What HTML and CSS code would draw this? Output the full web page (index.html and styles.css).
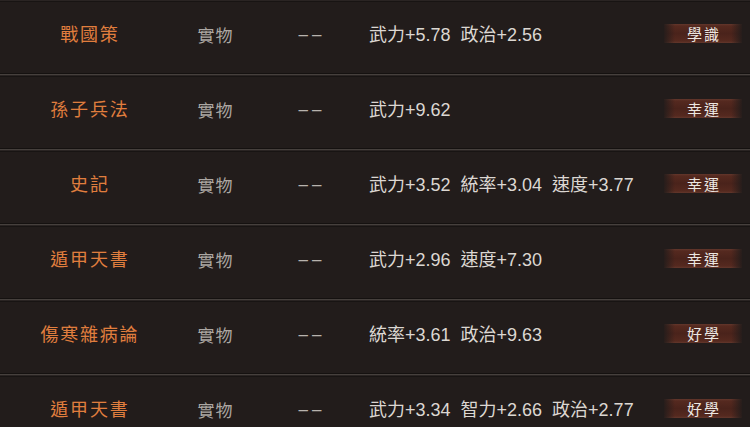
FILE: index.html
```html
<!DOCTYPE html>
<html lang="zh-Hant">
<head>
<meta charset="utf-8">
<link rel="stylesheet" href="styles.css">
</head>
<body>
<div class="list">
  <div class="row">
    <div class="sep"></div>
    <div class="cells">
      <div class="name">戰國策</div>
      <div class="kind">實物</div>
      <div class="dash">––</div>
      <div class="attrs"><span class="attr">武力+5.78</span><span class="attr">政治+2.56</span></div>
      <div class="badge">學識</div>
    </div>
  </div>
  <div class="row">
    <div class="sep"></div>
    <div class="cells">
      <div class="name">孫子兵法</div>
      <div class="kind">實物</div>
      <div class="dash">––</div>
      <div class="attrs"><span class="attr">武力+9.62</span></div>
      <div class="badge">幸運</div>
    </div>
  </div>
  <div class="row">
    <div class="sep"></div>
    <div class="cells">
      <div class="name">史記</div>
      <div class="kind">實物</div>
      <div class="dash">––</div>
      <div class="attrs"><span class="attr">武力+3.52</span><span class="attr">統率+3.04</span><span class="attr">速度+3.77</span></div>
      <div class="badge">幸運</div>
    </div>
  </div>
  <div class="row">
    <div class="sep"></div>
    <div class="cells">
      <div class="name">遁甲天書</div>
      <div class="kind">實物</div>
      <div class="dash">––</div>
      <div class="attrs"><span class="attr">武力+2.96</span><span class="attr">速度+7.30</span></div>
      <div class="badge">幸運</div>
    </div>
  </div>
  <div class="row">
    <div class="sep"></div>
    <div class="cells">
      <div class="name">傷寒雜病論</div>
      <div class="kind">實物</div>
      <div class="dash">––</div>
      <div class="attrs"><span class="attr">統率+3.61</span><span class="attr">政治+9.63</span></div>
      <div class="badge">好學</div>
    </div>
  </div>
  <div class="row">
    <div class="sep"></div>
    <div class="cells">
      <div class="name">遁甲天書</div>
      <div class="kind">實物</div>
      <div class="dash">––</div>
      <div class="attrs"><span class="attr">武力+3.34</span><span class="attr">智力+2.66</span><span class="attr">政治+2.77</span></div>
      <div class="badge">好學</div>
    </div>
  </div>
</div>
</body>
</html>
```

FILE: styles.css
```css
html, body {
  margin: 0;
  padding: 0;
  background: #221c1b;
  overflow: hidden;
}
body {
  width: 750px;
  height: 427px;
  font-family: "Noto Sans CJK TC", sans-serif;
}
.list {
  margin-top: -2px;
  display: flex;
  flex-direction: column;
}
.row {
  height: 75px;
  display: flex;
  flex-direction: column;
  background: #221c1b;
}
.sep {
  height: 4px;
  flex: none;
  background: linear-gradient(to bottom, #151110 0, #151110 1px, #46403d 1px, #46403d 2px, #2a2423 2px, #2a2423 3px, #181413 3px);
}
.cells {
  flex: 1;
  display: grid;
  grid-template-columns: 178px 74px 116px 1fr 78px;
  align-items: center;
  padding: 0 8px 9px 0;
}
.name {
  text-align: center;
  color: #e07e3e;
  font-size: 18px;
  letter-spacing: 1.8px;
  padding-left: 1.8px;
}
.kind {
  text-align: center;
  color: #aca7a3;
  font-size: 17px;
  letter-spacing: 1px;
  padding-left: 1px;
  padding-top: 2px;
}
.dash {
  text-align: center;
  color: #b8b3ae;
  font-family: "Liberation Sans", sans-serif;
  font-size: 17px;
  letter-spacing: 4px;
  padding-left: 4px;
  padding-top: 3px;
}
.attrs {
  display: flex;
  gap: 10px;
  padding-left: 1px;
  color: #dcd7d2;
  font-family: "Liberation Sans", "Noto Sans CJK TC", sans-serif;
  font-size: 18px;
}
.badge {
  height: 19px;
  line-height: 19px;
  text-align: center;
  color: #ece7e2;
  font-size: 15px;
  letter-spacing: 2px;
  padding-left: 2px;
  background:
    linear-gradient(to right, rgba(34,28,27,0.9) 0, rgba(34,28,27,0) 14%, rgba(34,28,27,0) 86%, rgba(34,28,27,0.9) 100%),
    linear-gradient(to bottom, #63372c 0, #55291f 2px, #4a231b 50%, #55291f 17px, #63372c 19px);
}
```
